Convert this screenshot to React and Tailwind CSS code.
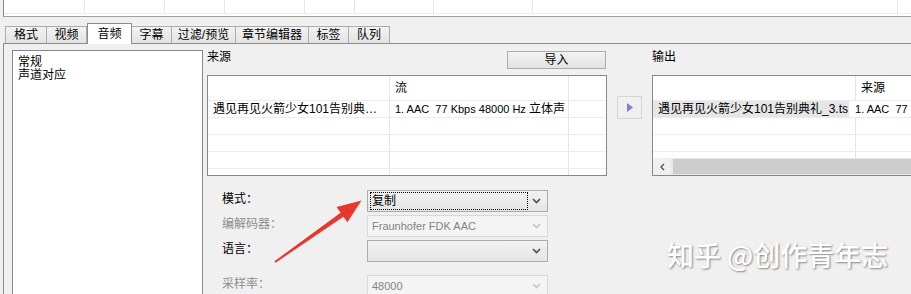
import React from "react";

const tabs = [
  { label: "格式", w: "w-[42px]" },
  { label: "视频", w: "w-[40px]" },
  { label: "音频", w: "w-[45px]", active: true },
  { label: "字幕", w: "w-[40px]" },
  { label: "过滤/预览", w: "w-[64px]" },
  { label: "章节编辑器", w: "w-[73px]" },
  { label: "标签", w: "w-[40px]" },
  { label: "队列", w: "w-[41px]" },
];

const topCols = ["w-[81px]", "w-[80px]", "w-[60px]", "w-[80px]", "w-[50px]", "w-[79px]", "w-[99px]", "w-[365px]"];

function Chevron({ disabled }) {
  return (
    <svg width="9" height="6" viewBox="0 0 9 6" className="shrink-0">
      <polyline
        points="1,1 4.5,4.5 8,1"
        fill="none"
        stroke={disabled ? "#c4c4c4" : "#4d4d4d"}
        strokeWidth="1.6"
      />
    </svg>
  );
}

function Select({ value, disabled, focused }) {
  return (
    <div
      className={
        "flex h-[22px] w-[181px] items-center justify-between border pl-[2px] pr-[6px] " +
        (disabled
          ? "border-[#d9d9d9] bg-[#f4f4f4] text-[#838383]"
          : "border-[#acacac] bg-linear-to-b from-[#f2f2f2] to-[#e5e5e5] text-black")
      }
    >
      {focused ? (
        <div className="flex h-[18px] w-[158px] items-center border border-dotted border-black pl-[1px] leading-[16px]">
          {value}
        </div>
      ) : (
        <div className="pl-[2px] text-[11px] leading-[16px]">{value}</div>
      )}
      <Chevron disabled={disabled} />
    </div>
  );
}

function FormRow({ label, muted, children, className = "" }) {
  return (
    <div className={"flex items-start " + className}>
      <div className={"w-[145px] pt-[1px] leading-[16px] " + (muted ? "text-[#8d8d8d]" : "text-black")}>
        {label}
      </div>
      {children}
    </div>
  );
}

export default function App() {
  return (
    <div className="relative h-[294px] w-[911px] overflow-hidden bg-[#f0f0f0] font-['Liberation_Sans','Noto_Sans_CJK_SC',sans-serif] text-[12px] text-black">
      {/* list view strip at the top */}
      <div className="ml-[3px] h-[17px] border-b border-l border-[#a0a0a0] border-l-[#828790] bg-white">
        <div className="flex h-[14px] border-b border-[#ebebeb]">
          {topCols.map((w, i) => (
            <div key={i} className={w + " shrink-0 border-r border-[#e5e5e5]"} />
          ))}
        </div>
      </div>

      {/* tabs */}
      <div className="relative z-10 mt-[6px] flex h-[20px] items-end pl-[5px]">
        {tabs.map((t, i) =>
          t.active ? (
            <div
              key={t.label}
              className={t.w + " -mb-px h-[21px] shrink-0 border border-b-0 border-[#898c95] bg-white pt-[2px] text-center leading-[16px]"}
            >
              {t.label}
            </div>
          ) : (
            <div
              key={t.label}
              className={
                t.w +
                " h-[17px] shrink-0 border-t border-r border-[#acacac] bg-linear-to-b from-[#f3f3f3] to-[#e3e3e3] text-center leading-[16px] " +
                (i === 0 ? "border-l" : "")
              }
            >
              {t.label}
            </div>
          )
        )}
      </div>

      {/* tab page */}
      <div className="ml-[3px] flex h-[260px] border-l border-t border-[#898c95] pl-[8px] pt-[6px]">
        <div className="h-[260px] w-[191px] shrink-0 border border-[#828790] bg-white pl-[5px] pt-[5px] leading-[13px]">
          <div>常规</div>
          <div>声道对应</div>
        </div>

        <div className="ml-[4px] flex items-start">
          {/* source */}
          <div className="w-[400px] shrink-0 pt-[1px]">
            <div className="flex h-[18px] items-start justify-between">
              <span className="leading-[13px]">来源</span>
              <button
                type="button"
                className="mr-px h-[18px] w-[99px] border border-[#acacac] bg-linear-to-b from-[#f2f2f2] to-[#e3e3e3] leading-[15px]"
              >
                导入
              </button>
            </div>
            <div className="mt-[6px] h-[101px] overflow-hidden border border-[#828790] bg-white">
              <div className="flex h-[24px]">
                <div className="w-[182px] border-r border-[#e5e5e5]" />
                <div className="w-[179px] border-r border-[#e5e5e5] pl-[5px] pt-[5px] leading-[14px]">流</div>
                <div className="flex-1" />
              </div>
              {[0, 1, 2, 3, 4].map((r) => (
                <div key={r} className="flex h-[17px] border-t border-[#ececec]">
                  <div className="w-[182px] truncate border-r border-[#e5e5e5] pl-[5px] leading-[16px]">
                    {r === 0 ? "遇见再见火箭少女101告别典…" : ""}
                  </div>
                  <div className="w-[179px] border-r border-[#e5e5e5] pl-[5px] text-[11px] leading-[16px]">
                    {r === 0 ? (
                      <>
                        1. AAC&nbsp; 77 Kbps 48000 Hz <span className="text-[12px]">立体声</span>
                      </>
                    ) : (
                      ""
                    )}
                  </div>
                  <div className="flex-1" />
                </div>
              ))}
            </div>

            {/* options */}
            <div className="mt-[14px] pl-[15px]">
              <FormRow label="模式：">
                <Select value="复制" focused />
              </FormRow>
              <FormRow label="编解码器：" muted className="mt-[3px]">
                <Select value="Fraunhofer FDK AAC" disabled />
              </FormRow>
              <FormRow label="语言：" className="mt-[3px]">
                <Select value="" />
              </FormRow>
              <FormRow label="采样率：" muted className="mt-[13px]">
                <Select value="48000" disabled />
              </FormRow>
            </div>
          </div>

          {/* add button */}
          <div className="ml-[10px] shrink-0 pt-[46px]">
            <div className="flex h-[23px] w-[25px] items-center justify-center border border-[#d5d5d5] bg-[#f0f0f0]">
              <svg width="6" height="9" viewBox="0 0 6 9">
                <polygon points="0,0 6,4.5 0,9" fill="#7c82d8" />
              </svg>
            </div>
          </div>

          {/* output */}
          <div className="ml-[10px] w-[280px] shrink-0 pt-[1px]">
            <div className="h-[18px] leading-[13px]">输出</div>
            <div className="mt-[6px] flex h-[101px] flex-col overflow-hidden border border-[#828790] bg-white">
              <div className="flex h-[24px] shrink-0">
                <div className="w-[203px] border-r border-[#e5e5e5]" />
                <div className="flex-1 pl-[5px] pt-[5px] leading-[14px]">来源</div>
              </div>
              <div className="flex-1 overflow-hidden">
                {[0, 1, 2, 3].map((r) => (
                  <div key={r} className="flex h-[17px] border-t border-[#ececec]">
                    <div
                      className={
                        "w-[203px] whitespace-nowrap border-r border-[#e5e5e5] pl-[5px] leading-[16px] " +
                        (r === 0 ? "bg-[#e6e6e6]" : "")
                      }
                    >
                      {r === 0 ? "遇见再见火箭少女101告别典礼_3.ts" : ""}
                    </div>
                    <div className="flex-1 whitespace-nowrap pl-[6px] text-[11px] leading-[16px]">
                      {r === 0 ? <>1. AAC&nbsp; 77 Kbps</> : ""}
                    </div>
                  </div>
                ))}
              </div>
              <div className="flex h-[17px] shrink-0 bg-[#e8e8e8]">
                <div className="flex w-[18px] items-center justify-center bg-[#f0f0f0]">
                  <svg width="5" height="8" viewBox="0 0 5 8">
                    <polyline points="4,1 1,4 4,7" fill="none" stroke="#555" strokeWidth="1.4" />
                  </svg>
                </div>
                <div className="ml-[2px] my-px flex-1 bg-[#cdcdcd]" />
              </div>
            </div>
          </div>
        </div>
      </div>

      {/* annotation arrow */}
      <svg className="pointer-events-none absolute left-0 top-0" width="911" height="294">
        <polygon
          points="275.6,262.7 343.4,216.7 347.4,222.3 361.5,200.6 336.6,207.1 340.6,212.7 274.4,261.3"
          fill="#e8372c"
        />
      </svg>

      {/* watermark */}
      <div className="pointer-events-none absolute left-[667px] top-[238px] whitespace-nowrap font-['Noto_Sans_CJK_SC',sans-serif] text-[27px] font-medium leading-[34px] text-white [text-shadow:1px_1px_2px_rgba(0,0,0,0.45)]">
        知乎 @创作青年志
      </div>
    </div>
  );
}
